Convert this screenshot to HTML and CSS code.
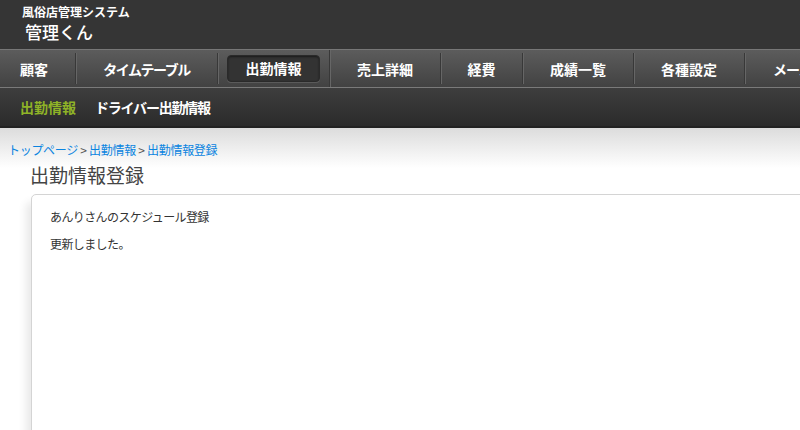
FILE: index.html
```html
<!DOCTYPE html>
<html lang="ja">
<head>
    <meta charset="UTF-8">
    <title>出勤情報登録 | 管理くん</title>
    <link rel="stylesheet" href="styles.css">
</head>
<body>
    <!-- Header -->
    <header class="site-header">
        <div class="site-sub">風俗店管理システム</div>
        <div class="site-name">管理くん</div>
    </header>

    <!-- Global navigation -->
    <nav class="global-nav">
        <ul class="nav-menu">
            <li class="nav-item nav-first">顧客</li>
            <li class="nav-item nav-wide">タイムテーブル</li>
            <li class="nav-item active"><span>出勤情報</span></li>
            <li class="nav-item">売上詳細</li>
            <li class="nav-item nav-short">経費</li>
            <li class="nav-item">成績一覧</li>
            <li class="nav-item">各種設定</li>
            <li class="nav-item nav-last">メール</li>
        </ul>
    </nav>

    <!-- Sub navigation -->
    <nav class="sub-nav">
        <a class="sub-item current">出勤情報</a>
        <a class="sub-item narrow">ドライバー出勤情報</a>
    </nav>

    <main class="main">
        <div class="breadcrumb">
            <a href="#">トップページ</a> &gt; <a href="#">出勤情報</a> &gt; <a href="#">出勤情報登録</a>
        </div>
        <h1 class="page-title">出勤情報登録</h1>
        <div class="panel">
            <p>あんりさんのスケジュール登録</p>
            <p>更新しました。</p>
        </div>
    </main>
</body>
</html>
```

FILE: styles.css
```css
* {
    margin: 0;
    padding: 0;
    box-sizing: border-box;
}

body {
    font-family: "Noto Sans CJK JP", "Liberation Sans", sans-serif;
    background: #fff;
    color: #333;
    overflow: hidden;
}

/* Header */
.site-header {
    height: 49px;
    background: #353535;
    color: #fff;
    padding: 4px 0 0 22px;
}

.site-sub {
    font-size: 12px;
    font-weight: bold;
    line-height: 16px;
}

.site-name {
    font-size: 17px;
    font-weight: 500;
    line-height: 22px;
    padding-left: 3px;
    margin-top: 1px;
}

/* Global nav */
.global-nav {
    height: 39px;
    background: linear-gradient(#5c5c5c, #424242);
    border-top: 1px solid #777;
    border-bottom: 1px solid #7a7a7a;
    overflow: hidden;
}

.nav-menu {
    list-style: none;
    display: flex;
    height: 100%;
    white-space: nowrap;
}

.nav-item {
    flex: none;
    width: 111px;
    display: flex;
    align-items: center;
    justify-content: center;
    color: #fff;
    font-size: 14px;
    font-weight: bold;
    border-right: 1px solid #383838;
    box-shadow: 1px 0 0 #666;
    margin: 3px 0;
}

.nav-first {
    width: 76px;
    justify-content: flex-start;
    padding-left: 20px;
}

.nav-wide {
    width: 142px;
    letter-spacing: -1.5px;
}

.nav-short {
    width: 82px;
}

.nav-last {
    justify-content: flex-start;
    padding-left: 28px;
    letter-spacing: -1px;
}

.nav-item.active {
    width: 112px;
    padding: 3px 9px;
    margin: 0;
}

.nav-item.active span {
    flex: 1;
    height: 27px;
    line-height: 25px;
    text-align: center;
    background: #333;
    border: 1px solid #2a2a2a;
    border-radius: 4px;
    box-shadow: inset 0 1px 2px rgba(0, 0, 0, 0.5), 0 1px 0 #5a5a5a;
}

/* Sub nav */
.sub-nav {
    height: 40px;
    background: linear-gradient(#3e3e3e, #2b2b2b);
    border-bottom: 2px solid #222;
    display: flex;
    align-items: center;
    gap: 19px;
    padding-left: 20px;
}

.sub-item {
    color: #fff;
    font-size: 14px;
    font-weight: bold;
}

.sub-item.current {
    color: #8fb327;
}

.sub-item.narrow {
    letter-spacing: -1.2px;
}

/* Main */
.main {
    background: linear-gradient(#dcdcdc, #fff 40px);
    padding-top: 15px;
}

.breadcrumb {
    font-size: 12px;
    line-height: 14px;
    color: #555;
    padding-left: 8px;
    letter-spacing: -0.3px;
}

.breadcrumb a {
    color: #0a84e0;
    text-decoration: none;
}

.page-title {
    font-size: 19px;
    font-weight: normal;
    color: #444;
    line-height: 24px;
    margin: 6px 0 7px 30px;
}

.panel {
    margin-left: 31px;
    margin-right: -10px;
    height: 260px;
    border: 1px solid #d4d4d4;
    border-radius: 5px 0 0 0;
    background: #fff;
    padding: 14px 18px;
    font-size: 12px;
    line-height: 16px;
    color: #333;
    letter-spacing: -0.6px;
    box-shadow: -5px 8px 8px rgba(0, 0, 0, 0.09);
}

.panel p + p {
    margin-top: 11px;
}
```
